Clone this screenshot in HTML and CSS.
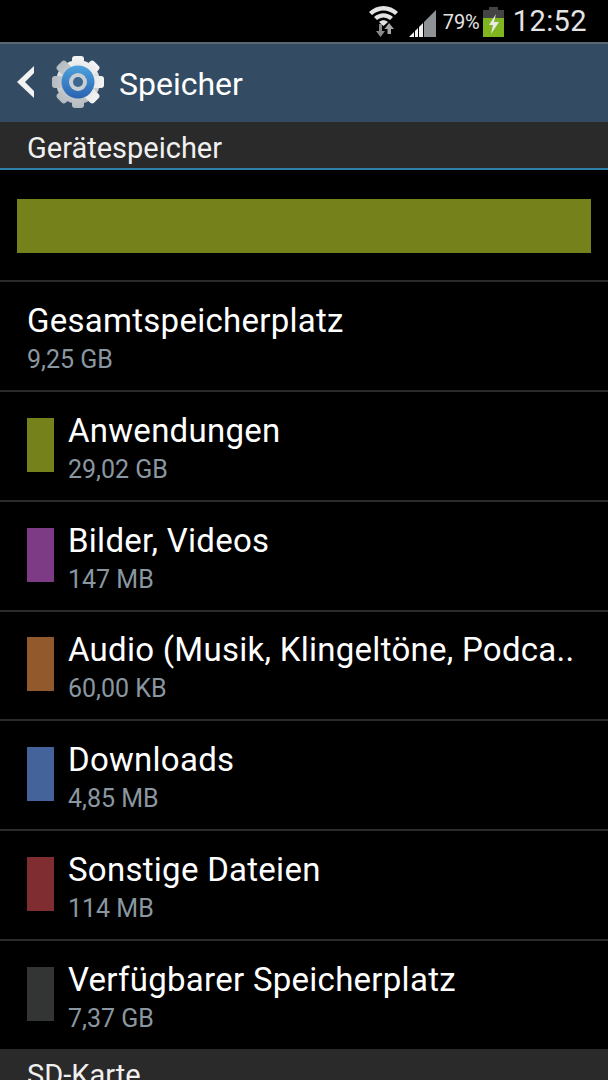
FILE: index.html
```html
<!DOCTYPE html>
<html>
<head>
<meta charset="UTF-8">
<title>Speicher</title>
<link rel="stylesheet" href="styles.css">
</head>
<body>
  <div class="status">
    <svg class="wifi" width="30" height="32" viewBox="0 0 30 32">
      <path d="M0 7C8 -1 21 -1 29 7L26 10C19 4 10 4 3 10Z" fill="#e4e4e4"/>
      <path d="M5 12C11 7 18 7 24 12L21 15C17 11.500 12 11.500 8 15Z" fill="#e4e4e4"/>
      <path d="M10 17C13 14.500 16 14.500 19 17L14.500 21Z" fill="#e4e4e4"/>
      <path d="M10 19H13V26H16L11.500 32 7 26H10Z" fill="#8a8a8a"/>
      <path d="M20 18L25 24H22V29H18.500V24H15.500Z" fill="#a8a8a8"/>
    </svg>
    <svg class="signal" width="28" height="27" viewBox="0 0 28 27">
      <path d="M0 27L5 22V27Z" fill="#f0f0f0"/>
      <path d="M6 21L9 18V27H6Z" fill="#f0f0f0"/>
      <path d="M10 17L14 13V27H10Z" fill="#f0f0f0"/>
      <path d="M15 12L27 0V27H15Z" fill="#8f9294"/>
    </svg>
    <span class="pct">79%</span>
    <svg class="batt" width="21" height="30" viewBox="0 0 21 30">
      <rect x="6" y="0" width="9" height="3" fill="#444"/>
      <rect x="0" y="3" width="21" height="8" fill="#444"/>
      <rect x="0" y="11" width="21" height="19" fill="#7fb51f"/>
      <path d="M13 7L6 18H10L8 27 16 15H11Z" fill="#e8e8e8"/>
    </svg>
    <span class="clock">12:52</span>
  </div>

  <div class="actionbar">
    <svg class="back" width="20" height="34" viewBox="0 0 20 34">
      <path d="M18 1L1 17 18 33 18 26 9 17 18 8Z" fill="#f2f2f2"/>
    </svg>
    <svg class="gear" width="54" height="54" viewBox="0 0 54 54">
      <defs>
        <linearGradient id="metal" x1="0" y1="0" x2="0" y2="1">
          <stop offset="0" stop-color="#f4f4f4"/>
          <stop offset="1" stop-color="#b4bbc0"/>
        </linearGradient>
        <linearGradient id="blue" x1="0" y1="0" x2="0" y2="1">
          <stop offset="0" stop-color="#4da3df"/>
          <stop offset="1" stop-color="#2a62b0"/>
        </linearGradient>
      </defs>
      <circle cx="27" cy="27" r="22" fill="url(#metal)"/>
      <g fill="url(#metal)">
        <rect x="21" y="1" width="12" height="52" rx="3"/>
        <rect x="21" y="1" width="12" height="52" rx="3" transform="rotate(45 27 27)"/>
        <rect x="21" y="1" width="12" height="52" rx="3" transform="rotate(90 27 27)"/>
        <rect x="21" y="1" width="12" height="52" rx="3" transform="rotate(135 27 27)"/>
      </g>
      <circle cx="27" cy="27" r="16.500" fill="url(#blue)"/>
      <circle cx="27" cy="27" r="9" fill="#c9ced2"/>
      <circle cx="27" cy="27" r="5" fill="#3d6690"/>
    </svg>
    <span class="actiontitle">Speicher</span>
  </div>

  <div class="section section-device">Gerätespeicher</div>

  <div class="usage"><div class="usagebar"></div></div>

  <div class="row">
    <div class="rowtext">
      <div class="name">Gesamtspeicherplatz</div>
      <div class="size">9,25 GB</div>
    </div>
  </div>
  <div class="row">
    <div class="swatch apps"></div>
    <div class="rowtext">
      <div class="name">Anwendungen</div>
      <div class="size">29,02 GB</div>
    </div>
  </div>
  <div class="row">
    <div class="swatch pics"></div>
    <div class="rowtext">
      <div class="name">Bilder, Videos</div>
      <div class="size">147 MB</div>
    </div>
  </div>
  <div class="row">
    <div class="swatch audio"></div>
    <div class="rowtext">
      <div class="name">Audio (Musik, Klingeltöne, Podca..</div>
      <div class="size">60,00 KB</div>
    </div>
  </div>
  <div class="row">
    <div class="swatch downloads"></div>
    <div class="rowtext">
      <div class="name">Downloads</div>
      <div class="size">4,85 MB</div>
    </div>
  </div>
  <div class="row">
    <div class="swatch other"></div>
    <div class="rowtext">
      <div class="name">Sonstige Dateien</div>
      <div class="size">114 MB</div>
    </div>
  </div>
  <div class="row">
    <div class="swatch free"></div>
    <div class="rowtext">
      <div class="name">Verfügbarer Speicherplatz</div>
      <div class="size">7,37 GB</div>
    </div>
  </div>

  <div class="section">SD-Karte</div>
</body>
</html>
```

FILE: styles.css
```css
html, body {
  margin: 0;
  padding: 0;
  height: 1080px;
  overflow: hidden;
  background-color: #000;
  color: #fff;
  font-family: Roboto, "Liberation Sans", sans-serif;
}

.status {
  height: 42px;
  display: flex;
  align-items: center;
  justify-content: flex-end;
  padding-right: 21px;
  color: #e4e4e4;
}
.wifi {
  margin-right: 10px;
  margin-top: 0;
}
.signal {
  margin-right: 6px;
  margin-top: 5px;
}
.pct {
  font-size: 20px;
  margin-right: 3px;
  margin-top: 1px;
}
.batt {
  margin-right: 9px;
  margin-top: 1px;
}
.clock {
  font-size: 29px;
  letter-spacing: 0.4px;
}

.actionbar {
  height: 78px;
  border-top: 2px solid #5a6670;
  background-color: #344c63;
  display: flex;
  align-items: center;
  padding-left: 16px;
}
.back {
  margin-right: 15px;
  margin-bottom: 2px;
}
.gear {
  margin-right: 14px;
  margin-bottom: 2px;
}
.actiontitle {
  font-size: 32px;
  padding-top: 2px;
}

.section {
  height: 47px;
  background-color: #2a2a2a;
  font-size: 29px;
  line-height: 53px;
  padding-left: 27px;
  color: #f0f0f0;
}
.section-device {
  height: 46px;
  border-bottom: 2px solid #2f7fa8;
}

.usage {
  height: 110px;
  padding: 29px 17px 0;
  box-sizing: border-box;
}
.usagebar {
  height: 54px;
  background-color: #75821b;
}

.row {
  height: 109.850px;
  box-sizing: border-box;
  border-top: 2px solid #2b2b2b;
  display: flex;
  align-items: center;
  padding-left: 27px;
}
.swatch {
  width: 27px;
  height: 54px;
  margin-right: 14px;
  margin-bottom: 2px;
}
.apps { background-color: #75821b; }
.pics { background-color: #7d3b85; }
.audio { background-color: #925a2c; }
.downloads { background-color: #44639b; }
.other { background-color: #7f2d31; }
.free { background-color: #333535; }

.rowtext {
  padding-top: 5px;
}
.name {
  font-size: 33px;
  letter-spacing: 0.27px;
  line-height: 40px;
  white-space: nowrap;
}
.size {
  font-size: 25px;
  line-height: 32px;
  margin-top: 3px;
  color: #8a97a1;
}
```
